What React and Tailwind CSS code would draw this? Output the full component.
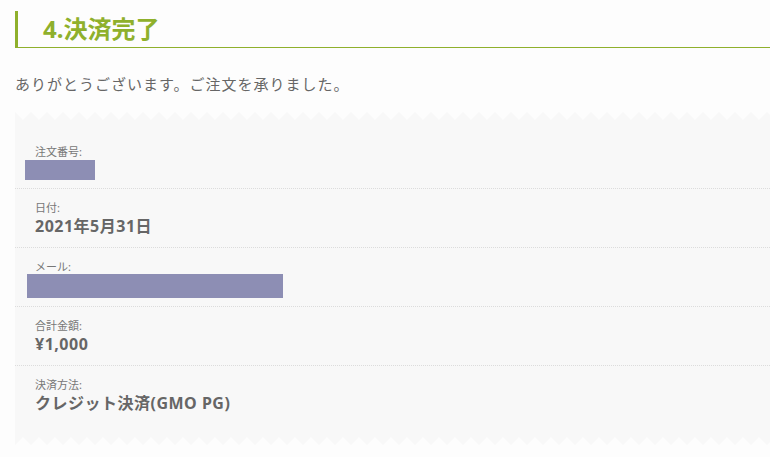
import React from "react";

const FONT = {
  fontFamily: '"Noto Sans", "Noto Sans CJK JP", sans-serif',
};

function Zigzag({ id, flip }) {
  return (
    <svg className="block w-full h-[8px]" aria-hidden="true">
      <defs>
        <pattern id={id} width="16" height="8" patternUnits="userSpaceOnUse">
          <polygon
            points={flip ? "0,0 16,0 16,8 8,0 0,8" : "0,0 8,8 16,0 16,8 0,8"}
            fill="#f8f8f8"
          />
        </pattern>
      </defs>
      <rect width="100%" height="8" fill={`url(#${id})`} />
    </svg>
  );
}

function Row({ label, children, last }) {
  return (
    <div
      className={`pl-[20px] pt-[12px] pb-[10px] ${
        last ? "" : "border-b border-dotted border-[#dcdcdc]"
      }`}
    >
      <div className="text-[11px] leading-[14px] text-[#777]">{label}</div>
      {children}
    </div>
  );
}

function Value({ children }) {
  return (
    <div className="text-[16px] leading-[22px] font-bold tracking-[0.5px] text-[#666]">
      {children}
    </div>
  );
}

export default function App() {
  const rows = [
    {
      label: "注文番号:",
      body: <div className="mt-[1px] -mb-[2px] -ml-[10px] w-[70px] h-[20px] bg-[#8d8eb4]" />,
    },
    { label: "日付:", body: <Value>2021年5月31日</Value> },
    {
      label: "メール:",
      body: <div className="-mb-[2px] -ml-[8px] w-[256px] h-[24px] bg-[#8d8eb4]" />,
    },
    { label: "合計金額:", body: <Value>¥1,000</Value> },
    { label: "決済方法:", body: <Value>クレジット決済(GMO PG)</Value> },
  ];

  return (
    <div className="min-h-screen bg-[#fdfdfd] pl-[15px] pt-[11px]" style={FONT}>
      <h2 className="h-[37px] flex items-center pl-[25px] border-l-[3px] border-b border-[#8fb02c] text-[24px] font-bold text-[#8fb02c] leading-none">
        4.決済完了
      </h2>

      <p className="mt-[26px] text-[15px] leading-[20px] tracking-[1px] text-[#666]">
        ありがとうございます。ご注文を承りました。
      </p>

      <div className="mt-[18px]">
        <Zigzag id="zz-top" />
        <div className="bg-[#f8f8f8] pt-[13px] pb-[13px]">
          {rows.map((r, i) => (
            <Row key={r.label} label={r.label} last={i === rows.length - 1}>
              {r.body}
            </Row>
          ))}
        </div>
        <Zigzag id="zz-bottom" flip />
      </div>
    </div>
  );
}
